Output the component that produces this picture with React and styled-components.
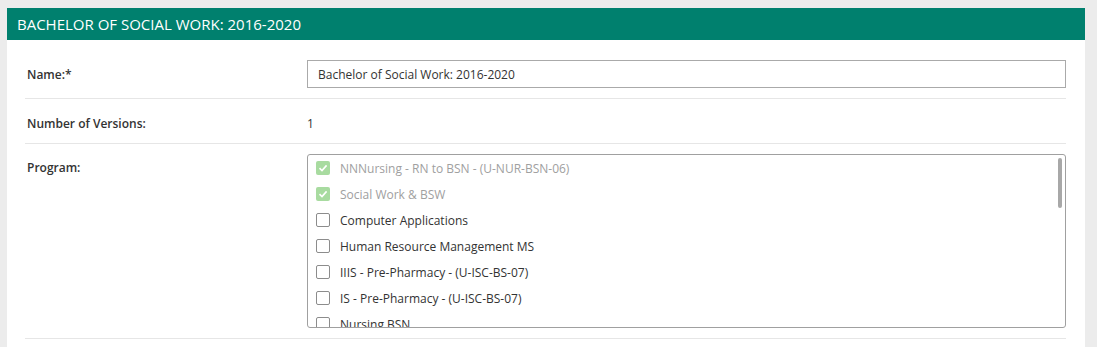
import React from "react";
import styled, { createGlobalStyle } from "styled-components";

const GlobalStyle = createGlobalStyle`
  html, body {
    margin: 0;
    padding: 0;
    background: #ececec;
    font-family: "Open Sans", "Liberation Sans", sans-serif;
  }
`;

const Page = styled.div`
  padding: 8px 12px 0 7px;
  height: 347px;
  box-sizing: border-box;
  overflow: hidden;
`;

const Panel = styled.div`
  background: #fff;
  height: 100%;
`;

const Header = styled.div`
  background: #00806e;
  color: #fff;
  height: 32px;
  display: flex;
  align-items: center;
  padding: 0 10px;
  font-size: 15px;
`;

const Body = styled.div`
  padding: 0 19px 0 18px;
`;

const Row = styled.div`
  display: grid;
  grid-template-columns: 282px 1fr;
  align-items: ${(p) => (p.top ? "start" : "center")};
  padding: ${(p) => p.pad || "10px 0"};
  border-bottom: 1px solid #e6e6e6;
`;

const Label = styled.div`
  font-size: 12px;
  font-weight: 600;
  color: #333;
  padding-left: 2px;
  padding-top: ${(p) => p.offset || "0"};
`;

const Value = styled.div`
  font-size: 12px;
  color: #333;
`;

const Input = styled.input`
  box-sizing: border-box;
  width: 100%;
  height: 28px;
  border: 1px solid #aaa;
  padding: 0 10px;
  font-family: inherit;
  font-size: 12px;
  color: #333;
  outline: none;
`;

const ListBox = styled.div`
  position: relative;
  height: 174px;
  border: 1px solid #a0a0a0;
  border-radius: 3px;
  overflow: hidden;
  box-sizing: border-box;
`;

const ScrollThumb = styled.div`
  position: absolute;
  top: 3px;
  right: 3px;
  width: 4px;
  height: 50px;
  border-radius: 2px;
  background: #a8a8a8;
`;

const Item = styled.div`
  display: flex;
  align-items: center;
  height: 26px;
  padding-left: 8px;
  font-size: 12px;
  color: ${(p) => (p.disabled ? "#a0a0a0" : "#333")};
`;

const Box = styled.span`
  width: 14px;
  height: 14px;
  box-sizing: border-box;
  margin-right: 10px;
  border-radius: 2px;
  display: inline-flex;
  align-items: center;
  justify-content: center;
  flex-shrink: 0;
  background: ${(p) => (p.checked ? "#a8dba0" : "#fff")};
  border: ${(p) => (p.checked ? "none" : "1px solid #8c8c8c")};
`;

const programs = [
  { name: "NNNursing - RN to BSN - (U-NUR-BSN-06)", checked: true },
  { name: "Social Work & BSW", checked: true },
  { name: "Computer Applications" },
  { name: "Human Resource Management MS" },
  { name: "IIIS - Pre-Pharmacy - (U-ISC-BS-07)" },
  { name: "IS - Pre-Pharmacy - (U-ISC-BS-07)" },
  { name: "Nursing BSN" },
];

const Check = () => (
  <svg width="12" height="12" viewBox="0 0 12 12">
    <path d="M2.5 6.2 L5 8.6 L9.6 3.4" fill="none" stroke="#fff" strokeWidth="1.6" />
  </svg>
);

export default function App() {
  return (
    <>
      <GlobalStyle />
      <Page>
        <Panel>
          <Header>BACHELOR OF SOCIAL WORK: 2016-2020</Header>
          <Body>
            <Row pad="20px 0 10px">
              <Label>Name:*</Label>
              <Input defaultValue="Bachelor of Social Work: 2016-2020" />
            </Row>
            <Row pad="16px 0 11px">
              <Label>Number of Versions:</Label>
              <Value>1</Value>
            </Row>
            <Row top pad="10px 0 10px">
              <Label offset="5px">Program:</Label>
              <ListBox>
                <ScrollThumb />
                {programs.map((p) => (
                  <Item key={p.name} disabled={p.checked}>
                    <Box checked={p.checked}>{p.checked && <Check />}</Box>
                    {p.name}
                  </Item>
                ))}
              </ListBox>
            </Row>
          </Body>
        </Panel>
      </Page>
    </>
  );
}
